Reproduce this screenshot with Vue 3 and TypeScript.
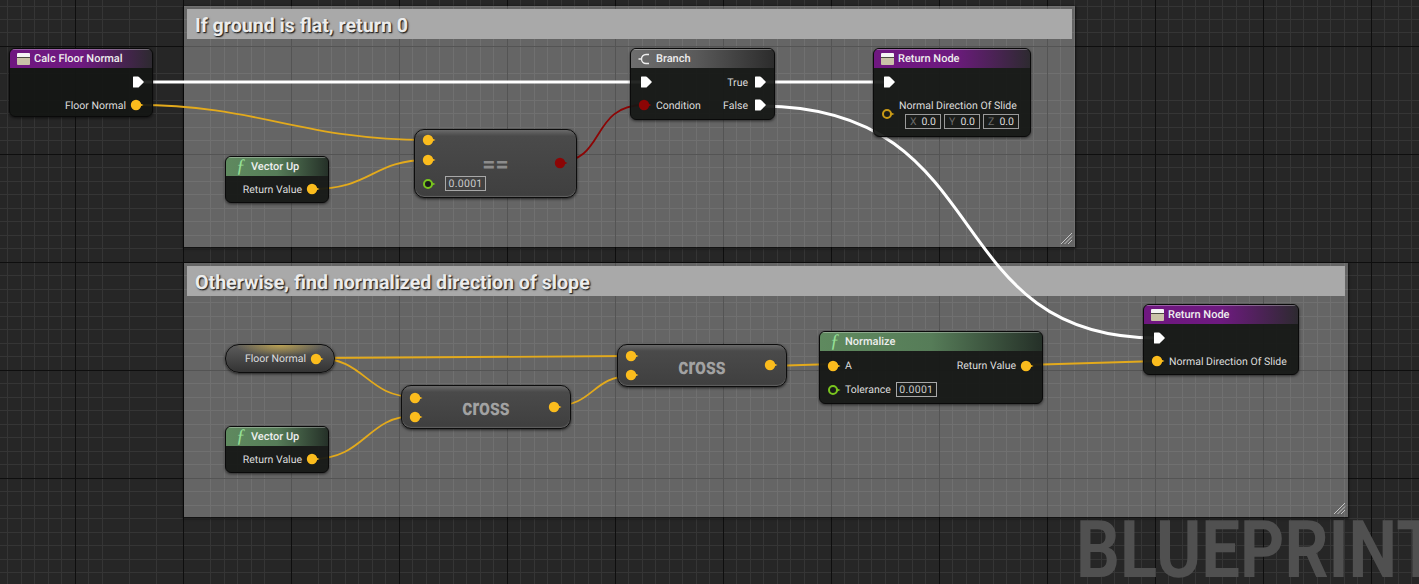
<template>
  <div class="graph">
    <svg class="defs" width="0" height="0">
      <defs>
        <path id="exec" d="M3.6 .5 H8 Q8.6 .5 9 1 L13.6 5.4 Q14 6 13.6 6.6 L9 11 Q8.6 11.5 8 11.5 H3.6 Q3 11.5 3 11 V1 Q3 .5 3.6 .5 Z" fill="#fff" />
        <g id="data"><path d="M10 4.4 L13.5 6 L10 7.6 Z" fill="#fbbc1d" /><circle cx="6" cy="6" r="5.2" fill="#fbbc1d" /></g>
        <g id="bool"><path d="M10 4.4 L13.5 6 L10 7.6 Z" fill="#8c0505" /><circle cx="6" cy="6" r="5.2" fill="#8c0505" /></g>
        <g id="float"><path d="M10 4.4 L13.5 6 L10 7.6 Z" fill="#79c51e" /><circle cx="6" cy="6" r="4" fill="#1a1c1a" stroke="#79c51e" stroke-width="2" /></g>
        <g id="vec"><path d="M10 4.4 L13.5 6 L10 7.6 Z" fill="#c99a16" /><circle cx="6" cy="6" r="4" fill="#1a1c1a" stroke="#c99a16" stroke-width="2" /></g>
      </defs>
    </svg>

    <div class="watermark">BLUEPRINT</div>

    <div v-for="c in comments" :key="c.title" class="comment" :style="place(c)">
      <div class="comment-title">{{ c.title }}</div>
      <svg class="grip" width="12" height="12" viewBox="0 0 12 12">
        <path d="M0 11 L11 0 M3.5 11 L11 3.5 M7 11 L11 7" stroke="#c4c4c4" stroke-width="1" fill="none" />
      </svg>
    </div>

    <svg class="wires" width="1419" height="584" fill="none">
      <path v-for="w in wires" :key="w.d" :d="w.d" :stroke="w.color" :stroke-width="w.width" />
    </svg>

    <div v-for="n in nodes" :key="n.id" class="node" :class="n.kind" :style="place(n)">
      <div class="head">
        <span v-if="n.kind === 'event'" class="box-icon"></span>
        <span v-else-if="n.kind === 'fn'" class="fn-icon">ƒ</span>
        <svg v-else width="14" height="12" viewBox="0 0 14 12" fill="none" stroke="#eee" stroke-width="1.4">
          <path d="M0.5 6 H3 M11 1.5 H8 A4.5 4.5 0 0 0 3.5 6 A4.5 4.5 0 0 0 8 10.5 H11" />
        </svg>
        {{ n.title }}
      </div>
      <div class="body" :class="{ short: n.rows.length === 1 }">
        <div v-for="(r, i) in n.rows" :key="i" class="row" :class="{ tall: r.vector, loose: n.id === 'normalize' }">
          <template v-if="r.left">
            <svg class="pin" viewBox="0 0 14 12"><use :href="'#' + r.left.type" /></svg>
            <div class="pin-text">
              <span v-if="r.left.label">{{ r.left.label }}</span>
              <div v-if="r.vector" class="vector">
                <div v-for="a in axes" :key="a" class="axis"><i>{{ a }}</i>0.0</div>
              </div>
            </div>
            <span v-if="r.left.literal" class="literal">{{ r.left.literal }}</span>
          </template>
          <div v-if="r.right" class="right">
            <span v-if="r.right.label">{{ r.right.label }}</span>
            <svg class="pin" viewBox="0 0 14 12"><use :href="'#' + r.right.type" /></svg>
          </div>
        </div>
      </div>
    </div>

    <div v-for="c in compact" :key="c.id" class="compact" :class="c.id" :style="place(c)">
      <div class="inputs">
        <svg v-for="k in 2" :key="k" class="pin" viewBox="0 0 14 12"><use href="#data" /></svg>
        <div v-if="c.literal" class="lit-row">
          <svg class="pin" viewBox="0 0 14 12"><use href="#float" /></svg>
          <span class="literal">{{ c.literal }}</span>
        </div>
      </div>
      <span class="op">{{ c.title }}</span>
      <svg class="pin" viewBox="0 0 14 12"><use :href="'#' + c.out" /></svg>
    </div>

    <div class="pill">
      <span>Floor Normal</span>
      <svg class="pin" viewBox="0 0 14 12"><use href="#data" /></svg>
    </div>
  </div>
</template>

<script setup lang="ts">
type Pin = { type: string; label?: string; literal?: string }
type Row = { left?: Pin; right?: Pin; vector?: boolean }
type Box = { x: number; y: number; w: number; h: number }

const place = (b: Box) => ({
  left: b.x + 'px',
  top: b.y + 'px',
  width: b.w + 'px',
  height: b.h + 'px'
})

const axes = ['X', 'Y', 'Z']

const comments = [
  { title: 'If ground is flat, return 0', x: 184, y: 6, w: 891, h: 241 },
  { title: 'Otherwise, find normalized direction of slope', x: 184, y: 263, w: 1164, h: 254 }
]

const yellow = '#e3aa1c'
const wires = [
  { d: 'M138 82 H644', color: '#fff', width: 3 },
  { d: 'M760 82 H887', color: '#fff', width: 3 },
  { d: 'M760 106 C1000 106 935 338 1157 338', color: '#fff', width: 3 },
  { d: 'M136 105 C260 105 300 140 428 140', color: yellow, width: 1.8 },
  { d: 'M312 189 C372 189 372 160 428 160', color: yellow, width: 1.8 },
  { d: 'M558 162 C606 162 590 105 644 105', color: '#8c0505', width: 1.8 },
  { d: 'M316 358 L631 356', color: yellow, width: 1.8 },
  { d: 'M316 358 C366 358 366 397 415 397', color: yellow, width: 1.8 },
  { d: 'M312 459 C366 459 366 416 415 416', color: yellow, width: 1.8 },
  { d: 'M554 406 C594 406 592 376 631 376', color: yellow, width: 1.8 },
  { d: 'M770 366 L834 364', color: yellow, width: 1.8 },
  { d: 'M1025 365 L1159 361', color: yellow, width: 1.8 }
]

const nodes: (Box & { id: string; kind: string; title: string; rows: Row[] })[] = [
  {
    id: 'calc', kind: 'event', title: 'Calc Floor Normal', x: 9, y: 48, w: 144, h: 69,
    rows: [{ right: { type: 'exec' } }, { right: { type: 'data', label: 'Floor Normal' } }]
  },
  {
    id: 'up1', kind: 'fn', title: 'Vector Up', x: 225, y: 156, w: 104, h: 47,
    rows: [{ right: { type: 'data', label: 'Return Value' } }]
  },
  {
    id: 'branch', kind: 'branch', title: 'Branch', x: 630, y: 48, w: 145, h: 72,
    rows: [
      { left: { type: 'exec' }, right: { type: 'exec', label: 'True' } },
      { left: { type: 'bool', label: 'Condition' }, right: { type: 'exec', label: 'False' } }
    ]
  },
  {
    id: 'ret1', kind: 'event', title: 'Return Node', x: 873, y: 48, w: 158, h: 89,
    rows: [{ left: { type: 'exec' } }, { left: { type: 'vec', label: 'Normal Direction Of Slide' }, vector: true }]
  },
  {
    id: 'up2', kind: 'fn', title: 'Vector Up', x: 225, y: 426, w: 104, h: 47,
    rows: [{ right: { type: 'data', label: 'Return Value' } }]
  },
  {
    id: 'normalize', kind: 'fn', title: 'Normalize', x: 819, y: 331, w: 224, h: 73,
    rows: [
      { left: { type: 'data', label: 'A' }, right: { type: 'data', label: 'Return Value' } },
      { left: { type: 'float', label: 'Tolerance', literal: '0.0001' } }
    ]
  },
  {
    id: 'ret2', kind: 'event', title: 'Return Node', x: 1143, y: 304, w: 156, h: 71,
    rows: [{ left: { type: 'exec' } }, { left: { type: 'data', label: 'Normal Direction Of Slide' } }]
  }
]

const compact = [
  { id: 'eq', title: '==', out: 'bool', literal: '0.0001', x: 414, y: 129, w: 163, h: 69 },
  { id: 'cross1', title: 'cross', out: 'data', literal: '', x: 401, y: 385, w: 170, h: 44 },
  { id: 'cross2', title: 'cross', out: 'data', literal: '', x: 617, y: 344, w: 170, h: 43 }
]
</script>

<style scoped>
.graph {
  position: relative;
  width: 1419px;
  height: 584px;
  overflow: hidden;
  font-family: Roboto, "Liberation Sans", sans-serif;
  text-rendering: geometricPrecision;
  background-color: #262626;
  background-image:
    repeating-linear-gradient(90deg, transparent 0 75px, #0e0e0e 75px 76px, transparent 76px 108px),
    repeating-linear-gradient(180deg, transparent 0 46px, #0e0e0e 46px 47px, transparent 47px 108px),
    repeating-linear-gradient(90deg, transparent 0 7.5px, #353535 7.5px 8.5px, transparent 8.5px 13.5px),
    repeating-linear-gradient(180deg, transparent 0 5.5px, #353535 5.5px 6.5px, transparent 6.5px 13.5px);
}

.defs {
  position: absolute;
}

.watermark {
  position: absolute;
  left: 1076px;
  top: 504px;
  font-size: 80px;
  line-height: 92px;
  font-weight: 700;
  color: #505050;
  white-space: nowrap;
  transform: scaleX(0.86);
  transform-origin: left center;
}

.comment {
  position: absolute;
  box-sizing: border-box;
  padding: 3px 3px 0;
  background: rgba(255, 255, 255, 0.295);
  box-shadow: 0 1px 2px 1px rgba(0, 0, 0, 0.55);
}

.comment-title {
  height: 30px;
  padding-left: 8px;
  font-size: 19.6px;
  line-height: 33px;
  font-weight: 700;
  color: #ececec;
  background: #a9a9a9;
  text-shadow: 1px 1px 1px #222, 1px 1px 2px rgba(0, 0, 0, 0.5);
}

.grip {
  position: absolute;
  right: 2px;
  bottom: 2px;
}

.wires {
  position: absolute;
  left: 0;
  top: 0;
}

.node {
  position: absolute;
  box-sizing: border-box;
  border: 1px solid #0a0a0a;
  border-radius: 6px;
  overflow: hidden;
  background: rgba(20, 23, 20, 0.93);
  box-shadow: 0 1px 3px rgba(0, 0, 0, 0.6);
}

.head {
  display: flex;
  align-items: center;
  gap: 4px;
  height: 19px;
  padding-left: 7px;
  font-size: 11px;
  font-weight: 500;
  color: #eee;
  box-shadow: inset 0 1px 0 rgba(255, 255, 255, 0.3);
}

.event .head {
  background: linear-gradient(90deg, #6f1780 0%, #6e1a80 50%, #2d2a30 100%);
}

.fn .head {
  padding-left: 10px;
  background: linear-gradient(90deg, #5f8a5f 0%, #567c58 50%, #253028 100%);
}

.branch .head {
  background: linear-gradient(90deg, #6e6e6e 0%, #5a5a5a 45%, #2c2c2c 100%);
}

.box-icon {
  box-sizing: border-box;
  width: 13px;
  height: 12px;
  border-radius: 1px;
  background: linear-gradient(#f4f4f4 0 4px, #4a4a40 4px 5px, #c9c2a8 5px);
}

.fn-icon {
  width: 11px;
  font-family: "Liberation Serif", serif;
  font-style: italic;
  font-size: 19px;
  line-height: 19px;
  font-weight: 400;
  color: #96e096;
}

.body {
  padding-top: 2.5px;
}

.body.short {
  padding-top: 1.5px;
}

.row {
  display: flex;
  align-items: center;
  gap: 4px;
  height: 23px;
  padding: 0 8px 0 7px;
  font-size: 10.5px;
  color: #ddd;
  white-space: nowrap;
}

.row.loose {
  height: 24px;
}

.row.tall {
  height: 38px;
  margin-top: 1px;
}

.pin {
  flex: none;
  width: 14px;
  height: 12px;
}

.pin-text {
  display: flex;
  flex-direction: column;
}

.right {
  display: flex;
  align-items: center;
  gap: 4px;
  margin-left: auto;
}

.literal {
  flex: none;
  box-sizing: border-box;
  width: 41px;
  height: 15px;
  margin-left: 1px;
  border: 1px solid #a8a8a8;
  font-size: 10.5px;
  line-height: 13px;
  letter-spacing: 0.3px;
  text-align: center;
  color: #ccc;
}

.vector {
  display: flex;
  gap: 3px;
  margin: 2px 0 0 6px;
}

.axis {
  box-sizing: border-box;
  display: flex;
  justify-content: space-between;
  width: 36px;
  height: 15px;
  padding: 0 4px;
  border: 1px solid #9a9a9a;
  line-height: 13px;
  color: #ddd;
}

.axis i {
  font-style: normal;
  color: #6c6c6c;
}

.compact {
  position: absolute;
  box-sizing: border-box;
  display: flex;
  align-items: center;
  justify-content: space-between;
  padding: 0 8px 0 7px;
  border: 1px solid #0d0d0d;
  border-radius: 10px;
  background: linear-gradient(#6a6a6a 0, #4a4a4a 6px, #3f3f3f 100%);
  box-shadow: 0 1px 3px rgba(0, 0, 0, 0.7), inset 0 -1px 1px rgba(255, 255, 255, 0.18);
}

.compact > .pin {
  margin-bottom: 1px;
}

.inputs {
  display: flex;
  flex-direction: column;
  gap: 7px;
}

.eq .inputs {
  gap: 8px;
  margin-bottom: 2px;
}

.lit-row {
  display: flex;
  align-items: center;
  gap: 8px;
  width: 14px;
  margin-top: 2px;
}

.op {
  position: absolute;
  left: 0;
  right: 0;
  top: 50%;
  transform: translateY(-50%) scaleX(0.84);
  font-size: 23px;
  font-weight: 700;
  text-align: center;
  color: #a2a2a2;
  pointer-events: none;
}

.eq .op {
  transform: translateY(-50%);
  color: #8c8c8c;
}

.pill {
  position: absolute;
  left: 225px;
  top: 344px;
  box-sizing: border-box;
  display: flex;
  align-items: center;
  justify-content: flex-end;
  gap: 4px;
  width: 110px;
  height: 29px;
  padding-right: 10px;
  border: 1px solid #0d0d0d;
  border-radius: 14px;
  font-size: 10.5px;
  color: #ddd;
  background:
    radial-gradient(ellipse 45px 12px at 50% 0, rgba(225, 190, 80, 0.7), transparent),
    linear-gradient(#5c5c5c, #333 100%);
  box-shadow: 0 1px 3px rgba(0, 0, 0, 0.7);
}
</style>

<style>
html,
body {
  margin: 0;
  background: #262626;
  overflow: hidden;
}
</style>
